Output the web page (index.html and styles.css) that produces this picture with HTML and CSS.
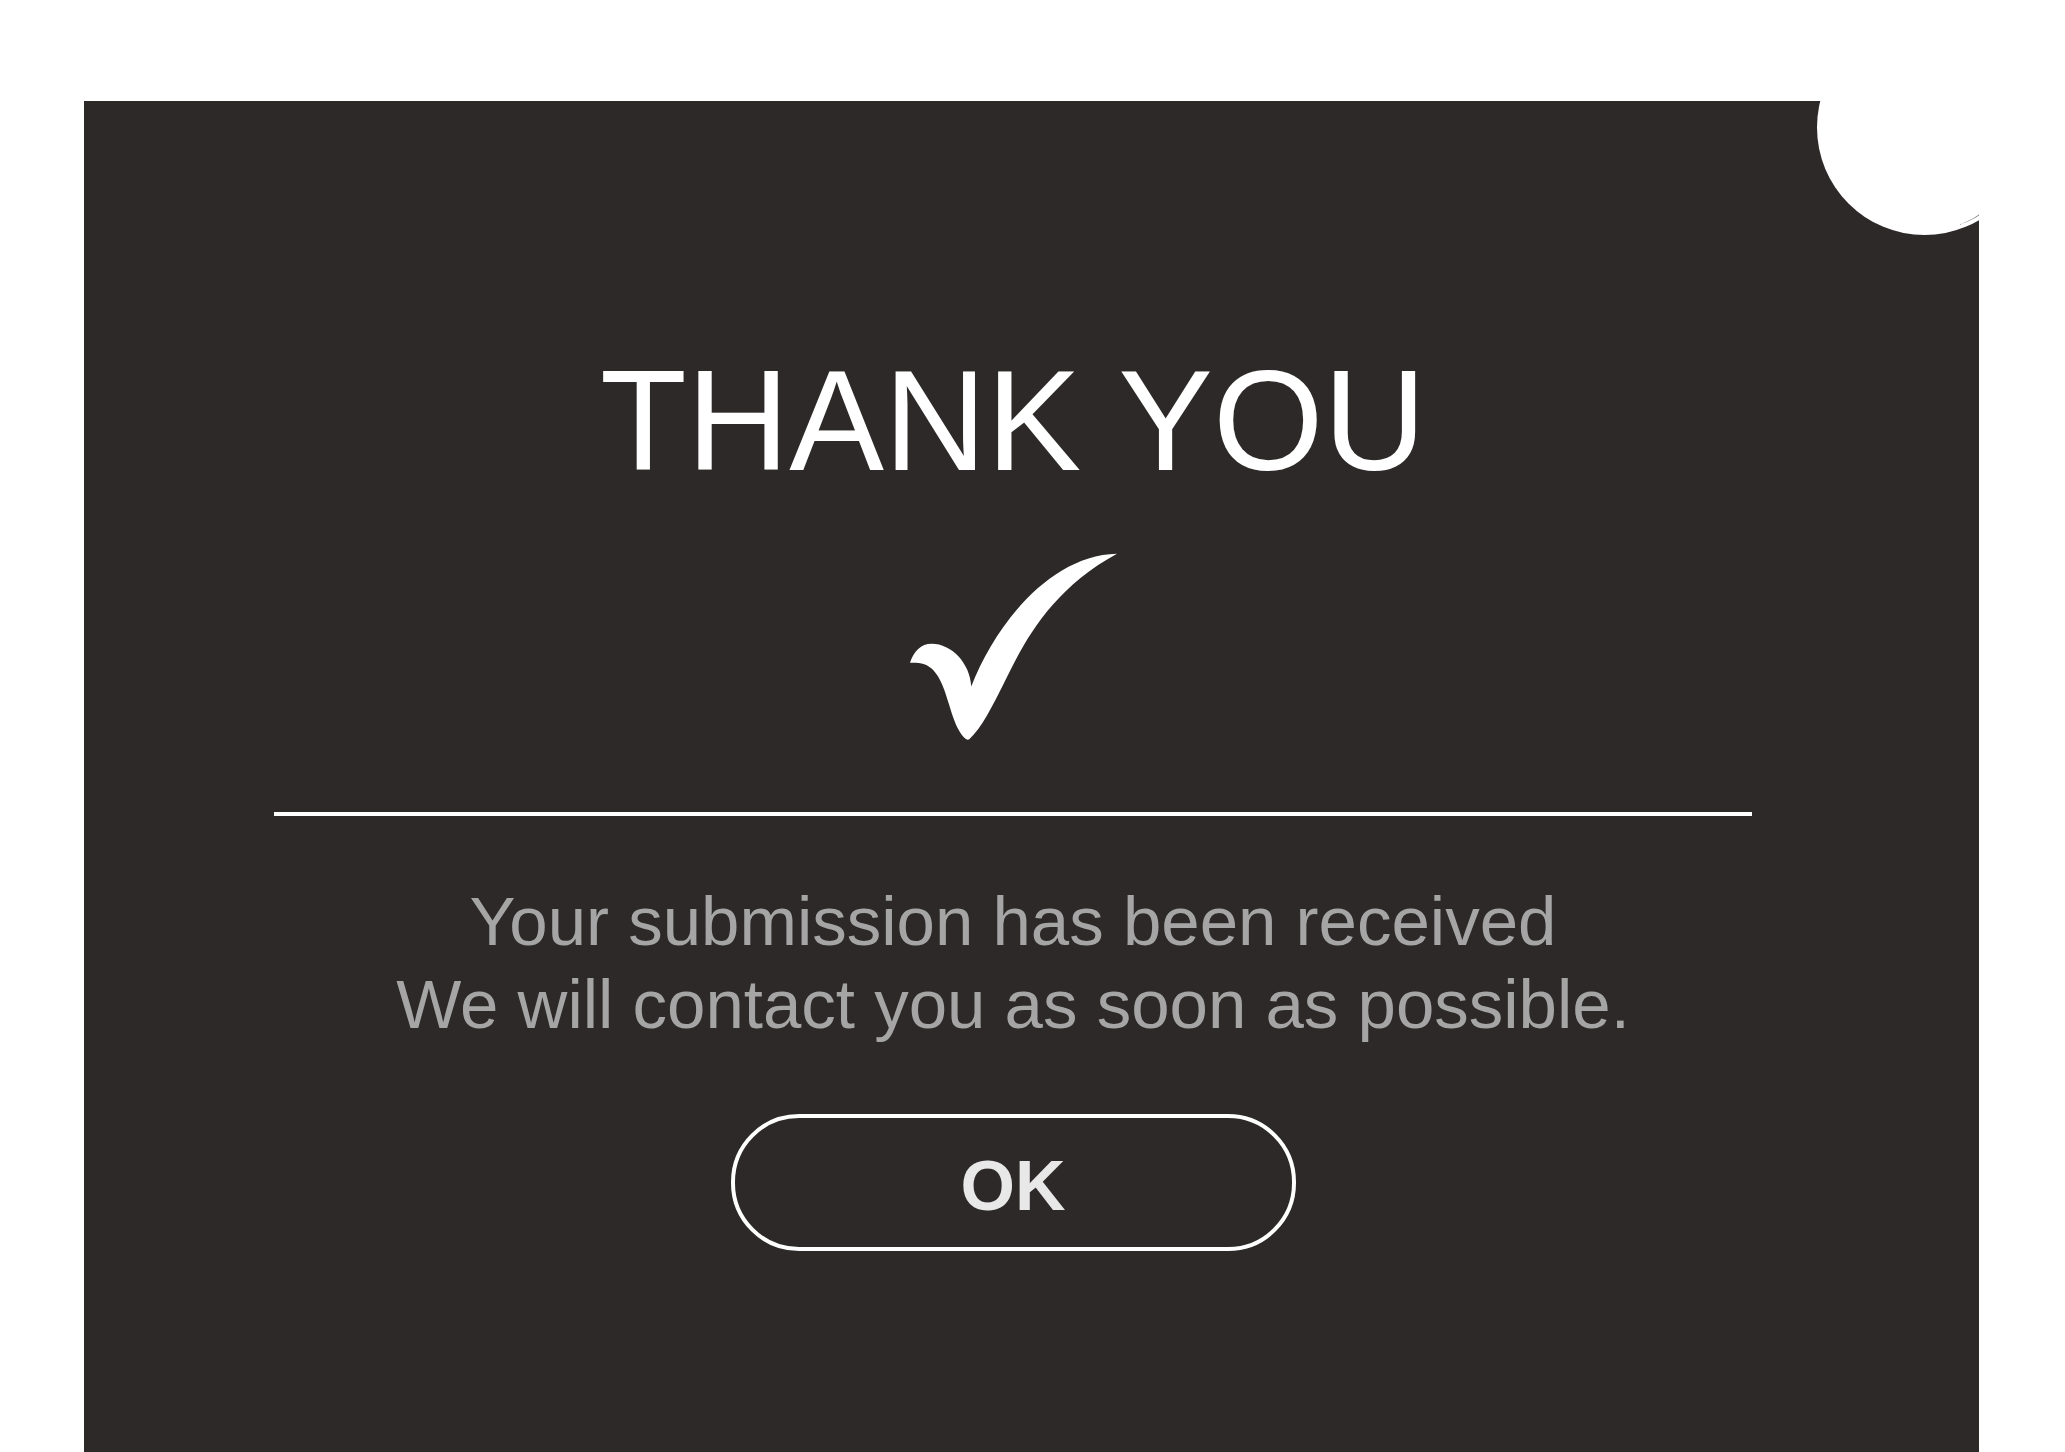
FILE: index.html
```html
<!DOCTYPE html>
<html lang="en">
<head>
<meta charset="utf-8">
<meta name="viewport" content="width=device-width, initial-scale=1">
<title>Thank you</title>
<link rel="stylesheet" href="styles.css">
</head>
<body>
<main class="card">
  <svg class="notch" viewBox="0 0 162 135" aria-hidden="true">
    <circle cx="107.500" cy="26.500" r="107.500" fill="#fff"/>
    <path d="M141 124Q153 120 162 113.500V114.500Q153 120.500 141 124Z" fill="#777"/>
  </svg>
  <h1 class="title">THANK YOU</h1>
  <svg class="check" viewBox="59 70 622 560" aria-hidden="true">
    <path fill="#fff" d="M59 399C70 365 92 342 124 342C184 342 239 400 243 470C315 285 480 75 681 71C480 180 400 340 343 457C305 532 275 595 237 629Q232 632 227 628C165 575 179 399 76 399Z"/>
  </svg>
  <hr class="divider">
  <p class="message">Your submission has been received<br>We will contact you as soon as possible.</p>
  <button class="ok" type="button">OK</button>
</main>
</body>
</html>
```
FILE: styles.css
```css
* {
  box-sizing: border-box;
}

body {
  margin: 0;
  min-height: 100vh;
  padding: 101px 86px 0 84px;
  display: flex;
  background: #fff;
  font-family: "Liberation Sans", Arial, sans-serif;
}

.card {
  position: relative;
  flex: 1;
  display: flex;
  flex-direction: column;
  align-items: center;
  padding: 240px 37px 200px 0;
  background: #2d2928;
}

.notch {
  position: absolute;
  top: 0;
  right: 0;
  width: 162px;
  height: 135px;
}

.title {
  margin: 0;
  font-size: 142px;
  font-weight: 400;
  line-height: 160px;
  color: #fff;
}

.check {
  width: 207px;
  height: 187px;
  margin-top: 52px;
}

.divider {
  width: calc(100% - 380px);
  height: 4px;
  margin: 72px 0 0;
  border: 0;
  background: #fff;
}

.message {
  margin: 64px 0 0;
  font-size: 69px;
  line-height: 83px;
  text-align: center;
  color: #a5a5a5;
}

.ok {
  width: 565px;
  height: 137px;
  margin-top: 68px;
  padding: 6px 0 0;
  border: 4px solid #fff;
  border-radius: 68px;
  background: transparent;
  font: 700 70px "Liberation Sans", Arial, sans-serif;
  color: #e8e8e8;
}
```
